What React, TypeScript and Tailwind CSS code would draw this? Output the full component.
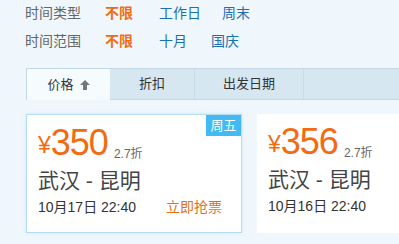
import React from 'react'

const font = { fontFamily: '"Liberation Sans", "Noto Sans CJK SC", sans-serif' }

function FilterRow({ label, items }: { label: string; items: { text: string; w: string }[] }) {
  return (
    <div className="flex items-center h-[28px] text-[14px]">
      <span className="w-[80px] text-[#666]">{label}</span>
      <span className="w-[54px] font-bold text-[#f26b11]">不限</span>
      {items.map((it) => (
        <span key={it.text} className={`${it.w} text-[#1a6fb3]`}>{it.text}</span>
      ))}
    </div>
  )
}

function Card({ price, date, badge, active }: { price: string; date: string; badge?: string; active?: boolean }) {
  return (
    <div
      className={`relative shrink-0 w-[216px] h-[119px] bg-white pl-[11px] pt-[7px] ${
        active ? 'border border-[#b5dcf2] shadow-[0_0_4px_#cfe9f8]' : ''
      }`}
    >
      {badge && (
        <div className="absolute top-0 right-0 w-[35px] h-[21px] bg-[#42baf3] text-white text-[13px] flex items-center justify-center">
          {badge}
        </div>
      )}
      <div className="flex items-end h-[37px] text-[#f26b11]">
        <span className="text-[23px] leading-none mb-[2px]">¥</span>
        <span className="text-[36px] leading-none -mb-[2px] tracking-[-1px]">{price}</span>
        <span className="text-[12px] text-[#666] ml-[6px] leading-none -mb-[1px]">2.7折</span>
      </div>
      <div className="text-[21px] text-[#444] mt-[8px] leading-[28px]">武汉 - 昆明</div>
      <div className="flex items-center justify-between pr-[19px] mt-[2px] text-[14px] leading-[20px]">
        <span className="text-[#333]">{date}</span>
        {active && <span className="text-[#e0711c]">立即抢票</span>}
      </div>
    </div>
  )
}

export default function App() {
  return (
    <div className="w-[399px] h-[244px] bg-[#f0f7fc] overflow-hidden" style={font}>
      <div className="pl-[25px] -mt-px">
        <FilterRow label="时间类型" items={[{ text: '工作日', w: 'w-[63px]' }, { text: '周末', w: 'w-[40px]' }]} />
        <FilterRow label="时间范围" items={[{ text: '十月', w: 'w-[52px]' }, { text: '国庆', w: 'w-[40px]' }]} />
      </div>
      <div className="ml-[26px] mt-[13px] h-[32px] flex bg-[#d6e7f1] border-y border-[#c3d8e6] text-[13px] text-[#333]">
        <div className="w-[84px] -mb-[1px] bg-[#f6fbfe] border-l border-[#c3d8e6] flex items-center justify-center gap-[6px]">
          价格
          <svg width="10" height="10" viewBox="0 0 10 10">
            <path d="M5 0 L10 5 L7 5 L7 10 L3 10 L3 5 L0 5 Z" fill="#777" />
          </svg>
        </div>
        <div className="w-[85px] border-r border-[#c8dbe8] flex items-center justify-center">折扣</div>
        <div className="w-[109px] border-r border-[#c8dbe8] flex items-center justify-center">出发日期</div>
        <div className="flex-1" />
      </div>
      <div className="flex gap-[15px] ml-[26px] mt-[14px]">
        <Card price="350" date="10月17日 22:40" badge="周五" active />
        <Card price="356" date="10月16日 22:40" />
      </div>
    </div>
  )
}
